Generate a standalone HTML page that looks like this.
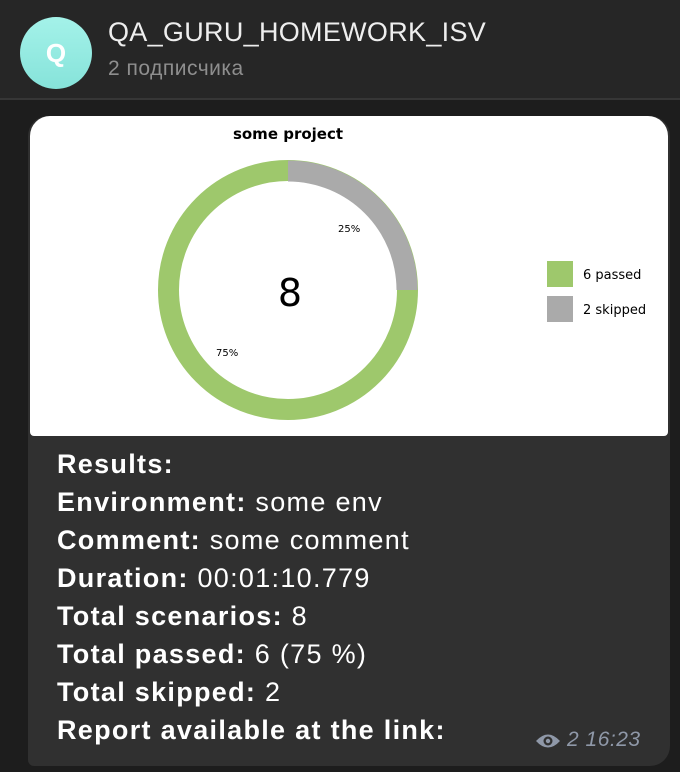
<!DOCTYPE html>
<html><head><meta charset="utf-8"><style>
body{margin:0;width:680px;height:772px;background:#1d1d1d;font-family:"Liberation Sans",sans-serif;overflow:hidden;position:relative}
.hdr{position:absolute;left:0;top:0;width:680px;height:98px;background:#262626;border-bottom:2px solid #363636}
.av{position:absolute;left:20px;top:17px;width:72px;height:72px;border-radius:50%;background:linear-gradient(#a4f2e9,#86e3da);color:#fff;font-weight:bold;font-size:26px;text-align:center;line-height:72px}
.t{position:absolute;left:108px;top:17px;color:#eee;font-size:27px;letter-spacing:0.3px}
.s{position:absolute;left:108px;top:57px;color:#8e8e8e;font-size:21px;letter-spacing:0.5px}
.bub{position:absolute;left:28px;top:116px;width:642px;height:650px;background:#303030;border-radius:20px 20px 20px 6px}
.img{position:absolute;left:30px;top:116px;width:638px;height:320px;background:#fff;border-radius:20px 20px 4px 4px}
.txt{position:absolute;left:57px;top:445px;color:#fff;font-size:27px;line-height:38px;letter-spacing:1.3px}
.txt b{font-weight:bold}
.meta{position:absolute;top:728px;color:#8f98a8;font-size:21px;font-style:italic;letter-spacing:0.5px}
</style></head><body>
<div class="hdr"><div class="av">Q</div><div class="t">QA_GURU_HOMEWORK_ISV</div><div class="s">2 подписчика</div></div>
<div class="bub"></div>
<div class="img">
<svg width="638" height="320" style="position:absolute;left:0;top:0">
<text x="258" y="23" font-family="DejaVu Sans" font-weight="bold" font-size="15" text-anchor="middle">some project</text>
<circle cx="258" cy="174" r="119.5" fill="none" stroke="#9ec86c" stroke-width="21"/>
<path d="M258 44.5 A129.5 129.5 0 0 1 387.5 174 L366.5 174 A108.5 108.5 0 0 0 258 65.5Z" fill="#aaaaaa"/>
<text x="260" y="190" font-family="DejaVu Sans" font-size="38" text-anchor="middle">8</text>
<text x="308" y="116" font-family="DejaVu Sans" font-size="10">25%</text>
<text x="186" y="240" font-family="DejaVu Sans" font-size="10">75%</text>
<rect x="517" y="145" width="26" height="26" fill="#9ec86c"/>
<rect x="517" y="180" width="26" height="26" fill="#aaaaaa"/>
<text x="553" y="163" font-family="DejaVu Sans" font-size="13">6 passed</text>
<text x="553" y="198" font-family="DejaVu Sans" font-size="13">2 skipped</text>
</svg></div>
<div class="txt"><b>Results:</b><br><b>Environment:</b> some env<br><b>Comment:</b> some comment<br><b>Duration:</b> 00:01:10.779<br><b>Total scenarios:</b> 8<br><b>Total passed:</b> 6 (75 %)<br><b>Total skipped:</b> 2<br><b>Report available at the link:</b></div>
<svg style="position:absolute;left:535px;top:731px" width="26" height="20" viewBox="0 0 26 20"><path d="M1 10 Q13 -3 25 10 Q13 23 1 10Z" fill="#8f98a8"/><circle cx="13" cy="10" r="4.5" fill="#303030"/><circle cx="13" cy="10" r="2.2" fill="#8f98a8"/></svg>
<div class="meta" style="left:567px">2 16:23</div>
</body></html>
